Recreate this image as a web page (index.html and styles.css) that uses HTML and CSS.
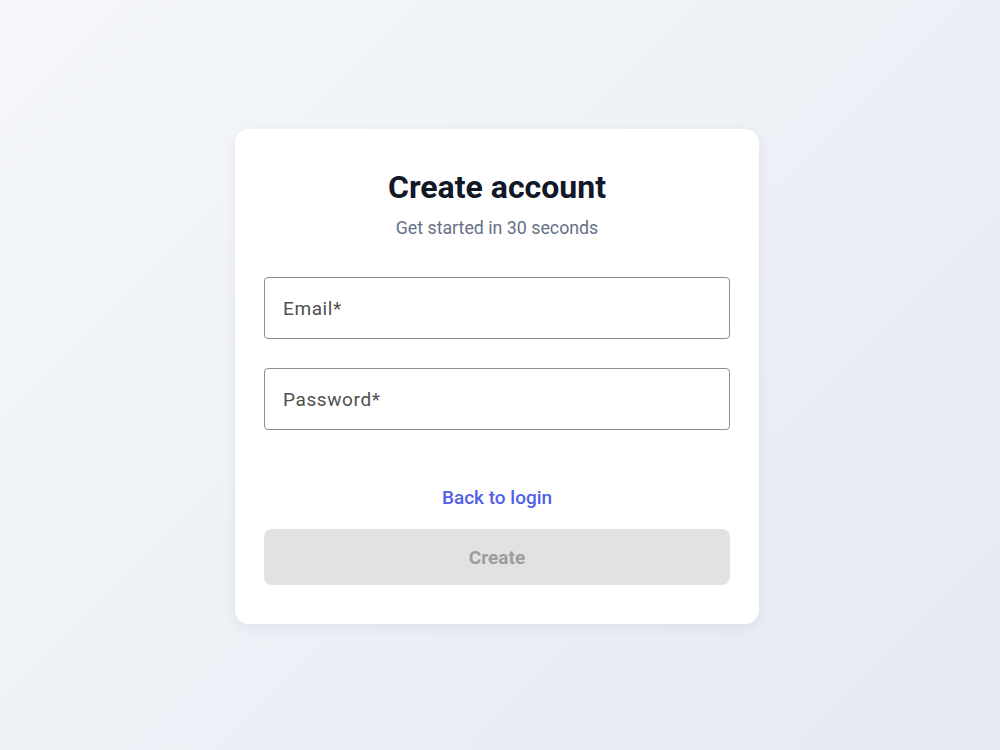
FILE: index.html
```html
<!DOCTYPE html>
<html lang="en">
<head>
    <meta charset="UTF-8">
    <meta name="viewport" content="width=device-width, initial-scale=1.0">
    <title>Create account</title>
    <link rel="stylesheet" href="styles.css">
</head>
<body>
    <main class="page">
        <form class="signup-card" onsubmit="return false">
            <h1 class="signup-title">Create account</h1>
            <p class="signup-subtitle">Get started in 30 seconds</p>

            <div class="signup-fields">
                <label class="field">
                    <input type="email" class="field-input" placeholder="Email*">
                </label>
                <label class="field">
                    <input type="password" class="field-input" placeholder="Password*">
                </label>
            </div>

            <a href="#" class="back-link">Back to login</a>
            <button type="submit" class="create-button" disabled>Create</button>
        </form>
    </main>
</body>
</html>
```

FILE: styles.css
```css
body {
    font-family: Roboto, "Liberation Sans", Arial, sans-serif;
    margin: 0;
    padding: 0;
    min-height: 100vh;
    background: linear-gradient(135deg, #f5f7fa 0%, #e5e9f1 100%);
}

.page {
    min-height: 100vh;
    display: flex;
    align-items: center;
    justify-content: center;
    padding: 3px 6px 0 0;
    box-sizing: border-box;
}

.signup-card {
    width: 524px;
    box-sizing: border-box;
    padding: 38px 29px 39px;
    background: #fff;
    border-radius: 14px;
    box-shadow: 0 4px 14px rgba(30, 41, 80, 0.06);
    display: flex;
    flex-direction: column;
}

.signup-title {
    margin: 0;
    font-size: 32px;
    line-height: 40px;
    font-weight: 700;
    letter-spacing: 0;
    color: #111827;
    text-align: center;
}

.signup-subtitle {
    margin: 9px 0 0;
    font-size: 17.8px;
    line-height: 24px;
    color: #667085;
    text-align: center;
}

.signup-fields {
    margin-top: 37px;
    display: flex;
    flex-direction: column;
    gap: 29px;
}

.field {
    display: block;
}

.field-input {
    display: block;
    width: 100%;
    height: 62px;
    box-sizing: border-box;
    padding: 0 18px;
    border: 1px solid #8f8f8f;
    border-radius: 4px;
    font-family: inherit;
    font-size: 19px;
    letter-spacing: 0.6px;
    color: #222;
    background: #fff;
    outline: none;
}

.field-input::placeholder {
    color: #4f4f4f;
    opacity: 1;
}

.back-link {
    margin-top: 56px;
    align-self: center;
    font-size: 19px;
    line-height: 24px;
    font-weight: 500;
    color: #5360e6;
    text-decoration: none;
}

.create-button {
    margin-top: 19px;
    height: 56px;
    border: none;
    border-radius: 8px;
    background: #e2e2e2;
    color: #9c9c9c;
    font-family: inherit;
    font-size: 19px;
    font-weight: 700;
}
```
